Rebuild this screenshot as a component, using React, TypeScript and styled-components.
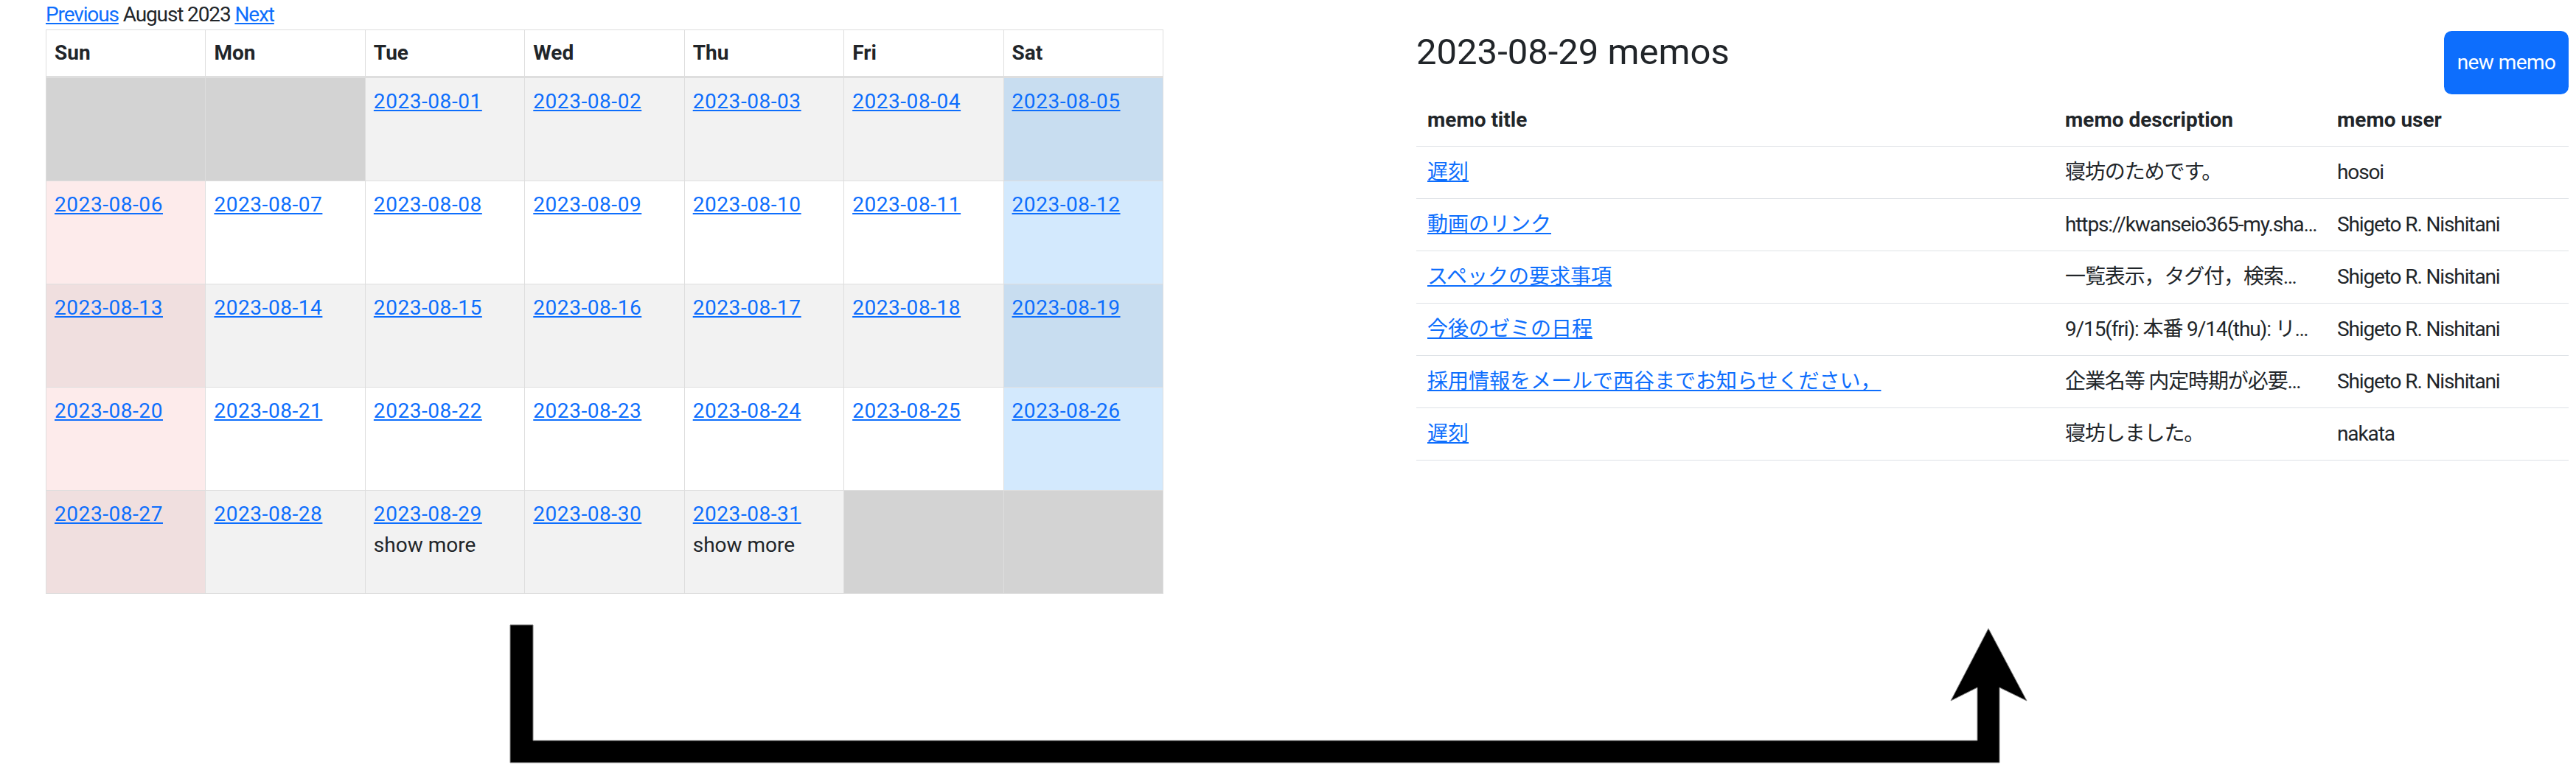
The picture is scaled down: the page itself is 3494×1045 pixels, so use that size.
import React from "react";
import styled, { createGlobalStyle } from "styled-components";

const GlobalStyle = createGlobalStyle`
  html, body { margin: 0; padding: 0; background: #fff; }
  body {
    font-family: Roboto, "Noto Sans CJK JP", sans-serif;
    font-size: 28px;
    line-height: 42px;
    color: #212529;
  }
  * { box-sizing: border-box; }
`;

const Page = styled.div`
  width: 3494px;
  height: 1045px;
  overflow: hidden;
  padding-left: 62px;
`;

const TopRow = styled.div`
  display: grid;
  grid-template-columns: 1516px 1563px;
  column-gap: 343px;
  align-items: start;
`;

const LeftCol = styled.section`
  display: flex;
  flex-direction: column;
`;

const MonthNav = styled.div`
  height: 40px;
  line-height: 40px;
  white-space: nowrap;
  letter-spacing: -0.04em;
`;

const Link = styled.a`
  color: #0d6efd;
  text-decoration: underline;
  cursor: pointer;
`;

const DateLink = styled(Link)`
  letter-spacing: 0.02em;
`;

const Calendar = styled.div`
  display: grid;
  grid-template-columns: repeat(7, 1fr);
  border-top: 1px solid #dedede;
  border-left: 1px solid #dedede;
`;

const HeadCell = styled.div`
  height: 65px;
  padding: 10px 11px;
  font-weight: 700;
  background: #fff;
  border-right: 1px solid #dedede;
  border-bottom: 3px solid #dedede;
`;

const DayCell = styled.div<{ $bg: string }>`
  height: 140px;
  padding: 11px 11px;
  background: ${(p) => p.$bg};
  border-right: 1px solid #dedede;
  border-bottom: 1px solid #dedede;
  display: flex;
  flex-direction: column;
  align-items: flex-start;
`;

const ShowMore = styled.span`
  color: #212529;
`;

const RightCol = styled.section`
  padding-top: 42px;
  display: flex;
  flex-direction: column;
`;

const HeaderRow = styled.div`
  display: flex;
  justify-content: space-between;
  align-items: flex-start;
  height: 86px;
`;

const Title = styled.h3`
  margin: 0;
  font-size: 49px;
  line-height: 58.8px;
  font-weight: 400;
`;

const NewButton = styled.button`
  width: 169px;
  height: 86px;
  padding: 0;
  border: none;
  border-radius: 10.5px;
  background: #0d6efd;
  color: #fff;
  font-family: inherit;
  font-size: 28px;
  line-height: 42px;
  letter-spacing: -0.02em;
  cursor: pointer;
`;

const MemoTable = styled.table`
  width: 100%;
  border-collapse: collapse;
  table-layout: fixed;
`;

const Th = styled.th<{ $pl?: number }>`
  padding: 14px 15px 14px ${(p) => p.$pl ?? 15}px;
  text-align: left;
  font-weight: 700;
  border-bottom: 1px solid #dee2e6;
`;

const Td = styled.td<{ $pl?: number; $pr?: number }>`
  padding: 14px ${(p) => p.$pr ?? 15}px 14px ${(p) => p.$pl ?? 15}px;
  text-align: left;
  border-bottom: 1px solid #dee2e6;
`;

const CellText = styled.div<{ $tight?: boolean }>`
  height: 42px;
  overflow: hidden;
  white-space: nowrap;
  text-overflow: ellipsis;
  letter-spacing: ${(p) => (p.$tight ? "-0.04em" : "normal")};
`;

const ArrowFigure = styled.svg`
  display: block;
  margin-top: 34px;
  margin-left: 578px;
`;

const dayNames = ["Sun", "Mon", "Tue", "Wed", "Thu", "Fri", "Sat"];

const weeks: (string | null)[][] = [
  [null, null, "01", "02", "03", "04", "05"],
  ["06", "07", "08", "09", "10", "11", "12"],
  ["13", "14", "15", "16", "17", "18", "19"],
  ["20", "21", "22", "23", "24", "25", "26"],
  ["27", "28", "29", "30", "31", null, null],
];

const withMore = new Set(["29", "31"]);

function cellBg(day: string | null, dow: number, row: number): string {
  const striped = row % 2 === 0;
  if (!day) return "#d3d3d3";
  if (dow === 0) return striped ? "#f0dfdf" : "#fdebeb";
  if (dow === 6) return striped ? "#c8ddf0" : "#d3e9fd";
  return striped ? "#f2f2f2" : "#ffffff";
}

const memos = [
  { title: "遅刻", desc: "寝坊のためです。", user: "hosoi" },
  { title: "動画のリンク", desc: "https://kwanseio365-my.sha…", user: "Shigeto R. Nishitani" },
  { title: "スペックの要求事項", desc: "一覧表示，タグ付，検索…", user: "Shigeto R. Nishitani" },
  { title: "今後のゼミの日程", desc: "9/15(fri): 本番 9/14(thu): リ…", user: "Shigeto R. Nishitani" },
  { title: "採用情報をメールで西谷までお知らせください，", desc: "企業名等 内定時期が必要…", user: "Shigeto R. Nishitani" },
  { title: "遅刻", desc: "寝坊しました。", user: "nakata" },
];

function Arrow() {
  const pts = [
    [52, 8], [83, 8], [83, 165], [2042, 165], [2042, 93], [2006, 111],
    [2057, 13], [2109, 111], [2072, 93], [2072, 195], [52, 195],
  ]
    .map(([x, y]) => `${x},${y}`)
    .join(" ");
  return (
    <ArrowFigure width={2120} height={200} viewBox="0 0 2120 200">
      <polygon points={pts} fill="#000" stroke="#808080" strokeWidth={1} />
    </ArrowFigure>
  );
}

export default function App() {
  return (
    <Page>
      <GlobalStyle />
      <TopRow>
        <LeftCol>
          <MonthNav>
            <Link>Previous</Link> August 2023 <Link>Next</Link>
          </MonthNav>
          <Calendar>
            {dayNames.map((d) => (
              <HeadCell key={d}>{d}</HeadCell>
            ))}
            {weeks.map((week, r) =>
              week.map((day, c) => (
                <DayCell key={`${r}-${c}`} $bg={cellBg(day, c, r)}>
                  {day && <DateLink>{`2023-08-${day}`}</DateLink>}
                  {day && withMore.has(day) && <ShowMore>show more</ShowMore>}
                </DayCell>
              ))
            )}
          </Calendar>
        </LeftCol>
        <RightCol>
          <HeaderRow>
            <Title>2023-08-29 memos</Title>
            <NewButton>new memo</NewButton>
          </HeaderRow>
          <MemoTable>
            <colgroup>
              <col style={{ width: 865 }} />
              <col style={{ width: 375 }} />
              <col style={{ width: 323 }} />
            </colgroup>
            <thead>
              <tr>
                <Th><CellText>memo title</CellText></Th>
                <Th><CellText>memo description</CellText></Th>
                <Th $pl={9}><CellText>memo user</CellText></Th>
              </tr>
            </thead>
            <tbody>
              {memos.map((m, i) => (
                <tr key={i}>
                  <Td><CellText><Link>{m.title}</Link></CellText></Td>
                  <Td $pr={4}><CellText $tight>{m.desc}</CellText></Td>
                  <Td $pl={9}><CellText $tight>{m.user}</CellText></Td>
                </tr>
              ))}
            </tbody>
          </MemoTable>
        </RightCol>
      </TopRow>
      <Arrow />
    </Page>
  );
}
